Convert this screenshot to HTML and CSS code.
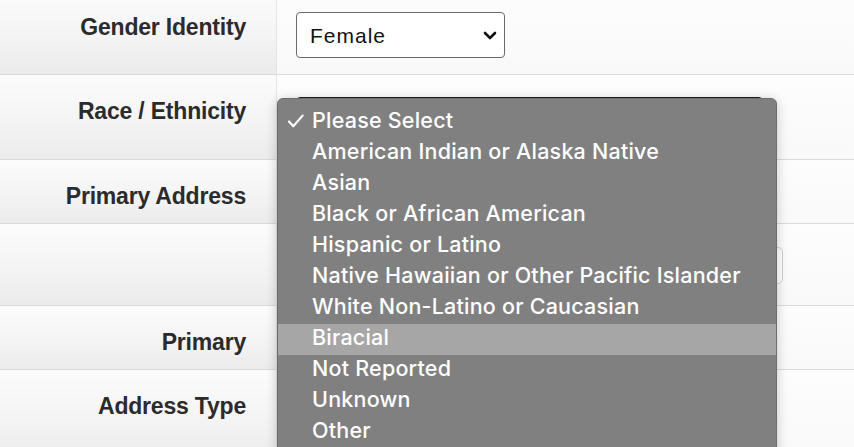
FILE: index.html
```html
<!DOCTYPE html>
<html>
<head>
<meta charset="utf-8">
<link rel="stylesheet" href="styles.css">
</head>
<body>
<div class="page">
  <div class="form">
    <div class="row r1">
      <div class="label">Gender Identity</div>
      <div class="field">
        <div class="select sel-gender">
          <span class="sel-text">Female</span>
          <svg class="chev" width="14" height="9" viewBox="0 0 14 9"><path d="M2 2 L7 7 L12 2" fill="none" stroke="#111" stroke-width="2.6" stroke-linecap="round" stroke-linejoin="round"/></svg>
        </div>
      </div>
    </div>
    <div class="row r2">
      <div class="label">Race / Ethnicity</div>
      <div class="field"><div class="select sel-race"></div></div>
    </div>
    <div class="row r3">
      <div class="label">Primary Address</div>
      <div class="field"></div>
    </div>
    <div class="row r4">
      <div class="label"></div>
      <div class="field"><div class="input"></div></div>
    </div>
    <div class="row r5">
      <div class="label">Primary</div>
      <div class="field"></div>
    </div>
    <div class="row r6">
      <div class="label">Address Type</div>
      <div class="field"></div>
    </div>
  </div>

  <ul class="menu">
    <li class="opt checked"><svg class="check" width="18" height="14" viewBox="0 0 18 14"><path d="M2 7.5 L6.3 12.3 L15.6 1.6" fill="none" stroke="#fff" stroke-width="2.2" stroke-linecap="round" stroke-linejoin="round"/></svg>Please Select</li>
    <li class="opt">American Indian or Alaska Native</li>
    <li class="opt">Asian</li>
    <li class="opt">Black or African American</li>
    <li class="opt">Hispanic or Latino</li>
    <li class="opt">Native Hawaiian or Other Pacific Islander</li>
    <li class="opt">White Non-Latino or Caucasian</li>
    <li class="opt hover">Biracial</li>
    <li class="opt">Not Reported</li>
    <li class="opt">Unknown</li>
    <li class="opt">Other</li>
  </ul>
</div>
</body>
</html>
```

FILE: styles.css
```css
html, body {
  margin: 0;
  padding: 0;
  background: #fbfbfb;
  overflow: hidden;
}

.page {
  position: relative;
  width: 854px;
  height: 447px;
  overflow: hidden;
  font-family: "Liberation Sans", Arial, sans-serif;
}

.form {
  margin-top: -9px;
}

.row {
  display: flex;
  border-bottom: 1px solid #dadada;
}

.r1 { height: 83px; }
.r2 { height: 84px; }
.r3 { height: 63px; }
.r4 { height: 81px; }
.r5 { height: 63px; }
.r6 { height: 90px; }

.label {
  width: 246px;
  flex: 0 0 246px;
  padding: 22px 30px 0 0;
  text-align: right;
  font-weight: bold;
  font-size: 23px;
  line-height: 28px;
  letter-spacing: -0.2px;
  color: #2b2b2b;
  background: linear-gradient(to bottom, #fcfcfc 0%, #f3f3f3 60%, #ebebeb 100%);
  border-right: 1px solid #e4e4e4;
}

.field {
  flex: 1;
  padding-left: 19px;
  background: linear-gradient(to bottom, #fdfdfd, #f9f9f9);
}

.select {
  box-sizing: border-box;
  background: #fff;
  border: 1px solid #6a6a6a;
  border-radius: 4px;
  display: flex;
  align-items: center;
}

.sel-gender {
  margin-top: 21px;
  width: 209px;
  height: 46px;
  padding: 0 7px 0 13px;
  justify-content: space-between;
}

.sel-text {
  font-size: 21px;
  letter-spacing: 1px;
  color: #111;
  margin-top: 1px;
}

.chev {
  display: block;
  margin-top: 1px;
}

.sel-race {
  margin-top: 22px;
  width: 467px;
  height: 40px;
  border-color: #222;
}

.input {
  box-sizing: border-box;
  margin-top: 23px;
  width: 487px;
  height: 37px;
  border: 1px solid #cfcfcf;
  border-radius: 5px;
  background: #fff;
}

.menu {
  position: absolute;
  left: 277px;
  top: 98px;
  width: 500px;
  box-sizing: border-box;
  margin: 0;
  padding: 8px 0 10px;
  list-style: none;
  background: #808080;
  border: 1px solid #6c6c6c;
  border-radius: 6px;
  box-shadow: 0 2px 12px rgba(0, 0, 0, 0.22);
  font-family: Inter, "Noto Sans", sans-serif;
  font-size: 21.5px;
  font-weight: 500;
  letter-spacing: 0.22px;
  color: #fff;
}

.opt {
  position: relative;
  height: 31px;
  line-height: 26px;
  padding-left: 34px;
  white-space: nowrap;
}

.opt.hover {
  background: #a6a6a6;
}

.check {
  position: absolute;
  left: 9px;
  top: 7px;
}
```
